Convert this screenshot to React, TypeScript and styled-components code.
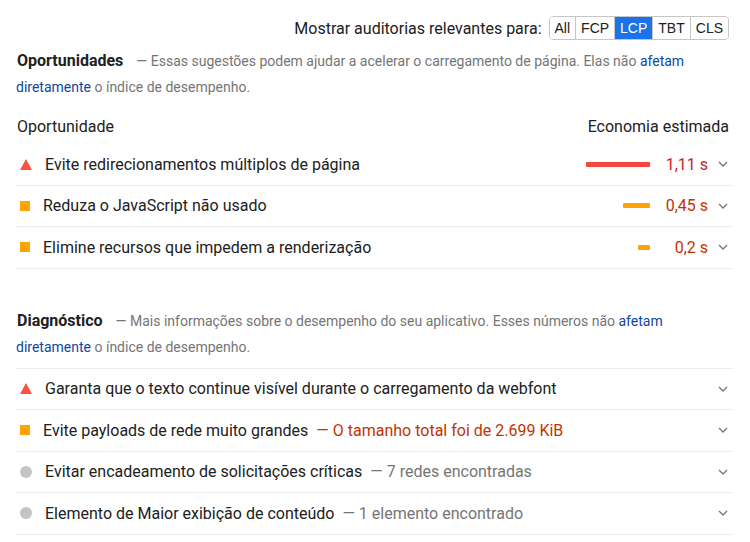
import styled, { createGlobalStyle } from "styled-components";

type Level = "fail" | "average" | "info";

interface Oportunidade {
  titulo: string;
  nivel: Level;
  valor: string;
  barra: number;
}

interface Diagnostico {
  titulo: string;
  nivel: Level;
  detalhe?: string;
}

const oportunidades: Oportunidade[] = [
  { titulo: "Evite redirecionamentos múltiplos de página", nivel: "fail", valor: "1,11 s", barra: 64 },
  { titulo: "Reduza o JavaScript não usado", nivel: "average", valor: "0,45 s", barra: 27 },
  { titulo: "Elimine recursos que impedem a renderização", nivel: "average", valor: "0,2 s", barra: 12 },
];

const diagnosticos: Diagnostico[] = [
  { titulo: "Garanta que o texto continue visível durante o carregamento da webfont", nivel: "fail" },
  { titulo: "Evite payloads de rede muito grandes", nivel: "average", detalhe: "— O tamanho total foi de 2.699 KiB" },
  { titulo: "Evitar encadeamento de solicitações críticas", nivel: "info", detalhe: "— 7 redes encontradas" },
  { titulo: "Elemento de Maior exibição de conteúdo", nivel: "info", detalhe: "— 1 elemento encontrado" },
];

const filtros = ["All", "FCP", "LCP", "TBT", "CLS"];

const GlobalStyle = createGlobalStyle`
  body {
    margin: 0;
    background: #ffffff;
    font-family: Roboto, "Liberation Sans", sans-serif;
    color: #212121;
  }
`;

const Page = styled.div`
  padding: 16px 17px 0 16px;
`;

const FilterBar = styled.div`
  display: flex;
  justify-content: flex-end;
  align-items: center;
  gap: 7px;
  padding-right: 4px;
  margin-bottom: 8px;
`;

const FilterLabel = styled.span`
  font-size: 16px;
  color: #212121;
`;

const FilterGroup = styled.div`
  display: flex;
  height: 24px;
  border: 1px solid #c6c6c6;
  border-radius: 4px;
  overflow: hidden;
  box-sizing: border-box;
`;

const FilterButton = styled.button<{ $active?: boolean }>`
  border: none;
  border-left: 1px solid #c6c6c6;
  &:first-child {
    border-left: none;
  }
  padding: 0 5px;
  margin: 0;
  font-family: "Liberation Sans", Arial, sans-serif;
  font-size: 14px;
  line-height: 22px;
  background: ${(p) => (p.$active ? "#1a73e8" : "#ffffff")};
  color: ${(p) => (p.$active ? "#ffffff" : "#212121")};
`;

const SectionHeader = styled.div<{ $divider?: boolean }>`
  line-height: 25px;
  padding-bottom: ${(p) => (p.$divider ? "8px" : "0")};
  border-bottom: ${(p) => (p.$divider ? "1px solid #ebebeb" : "none")};
`;

const SectionTitle = styled.span`
  font-size: 16px;
  font-weight: 700;
  color: #212121;
  padding-left: 1px;
`;

const SectionDesc = styled.span`
  font-size: 14px;
  color: #757575;
  margin-left: 13px;
`;

const DescLink = styled.a`
  color: #0d47a1;
  text-decoration: none;
`;

const TableHeader = styled.div`
  display: flex;
  justify-content: space-between;
  font-size: 16px;
  line-height: 20px;
  padding: 17px 4px 7px 1px;
`;

const Row = styled.div`
  display: flex;
  align-items: center;
  box-sizing: border-box;
  height: 41.5px;
  border-bottom: 1px solid #ebebeb;
  padding: 0 5px 0 4px;
`;

const IconBox = styled.span`
  display: flex;
  align-items: center;
  margin-right: 13px;
`;

const Square = styled.span`
  width: 10px;
  height: 10px;
  background: #ffa400;
`;

const Dot = styled.span`
  width: 12px;
  height: 12px;
  border-radius: 50%;
  background: #c4c4c4;
`;

const Title = styled.span`
  font-size: 16px;
  color: #212121;
  flex: 1;
  white-space: nowrap;
`;

const Detail = styled.span<{ $nivel: Level }>`
  margin-left: 8px;
  color: ${(p) => (p.$nivel === "average" ? "#c33300" : "#757575")};
`;

const BarTrack = styled.span`
  display: flex;
  justify-content: flex-end;
  width: 90px;
`;

const Bar = styled.span<{ $nivel: Level }>`
  height: 5px;
  border-radius: 1px;
  background: ${(p) => (p.$nivel === "fail" ? "#f4473e" : "#ffa400")};
`;

const Value = styled.span<{ $nivel: Level }>`
  width: 50px;
  margin-left: 8px;
  text-align: right;
  font-size: 16px;
  color: ${(p) => (p.$nivel === "fail" ? "#c7221f" : "#c33300")};
`;

const Chevron = styled.svg`
  margin-left: 10px;
  flex: none;
`;

const Diagnostics = styled.div`
  margin-top: 39px;
`;

function StatusIcon({ nivel }: { nivel: Level }) {
  if (nivel === "fail") {
    return (
      <IconBox>
        <svg width="12" height="11" viewBox="0 0 12 11">
          <polygon points="6,0 12,11 0,11" fill="#ff4e42" />
        </svg>
      </IconBox>
    );
  }
  if (nivel === "average") {
    return (
      <IconBox>
        <Square />
      </IconBox>
    );
  }
  return (
    <IconBox>
      <Dot />
    </IconBox>
  );
}

function Seta() {
  return (
    <Chevron width="10" height="6" viewBox="0 0 10 6">
      <path d="M1 1 L5 5 L9 1" fill="none" stroke="#757575" strokeWidth="1.3" />
    </Chevron>
  );
}

export default function App() {
  return (
    <>
      <GlobalStyle />
      <Page>
        <FilterBar>
          <FilterLabel>Mostrar auditorias relevantes para:</FilterLabel>
          <FilterGroup>
            {filtros.map((f) => (
              <FilterButton key={f} $active={f === "LCP"}>
                {f}
              </FilterButton>
            ))}
          </FilterGroup>
        </FilterBar>

        <SectionHeader>
          <SectionTitle>Oportunidades</SectionTitle>
          <SectionDesc>
            — Essas sugestões podem ajudar a acelerar o carregamento de página. Elas não{" "}
            <DescLink href="#">afetam diretamente</DescLink> o índice de desempenho.
          </SectionDesc>
        </SectionHeader>

        <TableHeader>
          <span>Oportunidade</span>
          <span>Economia estimada</span>
        </TableHeader>

        {oportunidades.map((o) => (
          <Row key={o.titulo}>
            <StatusIcon nivel={o.nivel} />
            <Title>{o.titulo}</Title>
            <BarTrack>
              <Bar $nivel={o.nivel} style={{ width: o.barra }} />
            </BarTrack>
            <Value $nivel={o.nivel}>{o.valor}</Value>
            <Seta />
          </Row>
        ))}

        <Diagnostics>
          <SectionHeader $divider>
            <SectionTitle>Diagnóstico</SectionTitle>
            <SectionDesc>
              — Mais informações sobre o desempenho do seu aplicativo. Esses números não{" "}
              <DescLink href="#">afetam diretamente</DescLink> o índice de desempenho.
            </SectionDesc>
          </SectionHeader>

          {diagnosticos.map((d) => (
            <Row key={d.titulo}>
              <StatusIcon nivel={d.nivel} />
              <Title>
                {d.titulo}
                {d.detalhe && <Detail $nivel={d.nivel}>{d.detalhe}</Detail>}
              </Title>
              <Seta />
            </Row>
          ))}
        </Diagnostics>
      </Page>
    </>
  );
}
